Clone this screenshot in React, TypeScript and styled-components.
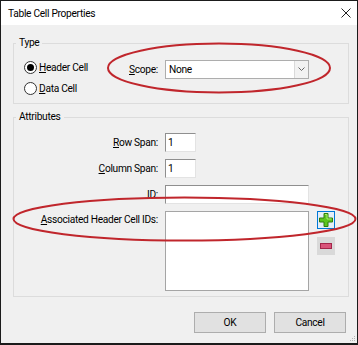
import React from 'react';
import styled, { createGlobalStyle } from 'styled-components';

const GlobalStyle = createGlobalStyle`
  html, body { margin: 0; padding: 0; background: #fff; }
  body {
    font-family: Roboto, "Noto Sans", sans-serif;
    font-size: 10.2px;
    letter-spacing: -0.3px;
    color: #000;
  }
  * { box-sizing: border-box; }
`;

const Dialog = styled.div`
  position: relative;
  width: 358px;
  height: 345px;
  border: 1px solid #1b1b1b;
  border-bottom-width: 2px;
  display: flex;
  flex-direction: column;
  background: #f0f0f0;
  overflow: hidden;
`;

const TitleBar = styled.div`
  height: 24px;
  flex: none;
  background: #fff;
  display: flex;
  align-items: center;
  justify-content: space-between;
  padding: 0 6px 0 7px;
`;

const Body = styled.div`
  flex: 1;
  display: flex;
  flex-direction: column;
  padding: 10px 8px 0 12px;
`;

const Group = styled.fieldset<{ $gap?: number }>`
  margin: ${(p) => p.$gap ?? 0}px 0 0 0;
  padding: 0;
  min-width: 0;
  border: 1px solid #dcdcdc;
`;

const Legend = styled.legend`
  padding: 0 3px;
  margin-left: 2px;
  line-height: 16px;
`;

const TypeGrid = styled.div`
  display: grid;
  grid-template-columns: 1fr auto 144px;
  grid-template-rows: 21px 21px;
  column-gap: 7px;
  align-items: center;
  padding: 6px 39px 4px 10px;
`;

const RadioLabel = styled.label<{ $row: number }>`
  grid-column: 1;
  grid-row: ${(p) => p.$row};
  display: inline-flex;
  align-items: center;
  gap: 2px;
`;

const RadioDot = styled.span<{ $checked?: boolean }>`
  width: 13px;
  height: 13px;
  border-radius: 50%;
  border: 1px solid #333;
  background: #fff;
  display: inline-flex;
  align-items: center;
  justify-content: center;
  &::after {
    content: '';
    width: 7px;
    height: 7px;
    border-radius: 50%;
    background: ${(p) => (p.$checked ? '#000' : 'transparent')};
  }
`;

const Key = styled.span`
  text-decoration: underline;
  text-underline-offset: 1px;
`;

const ScopeLabel = styled.span`
  grid-column: 2;
  grid-row: 1;
  margin-top: 3px;
`;

const Select = styled.div`
  grid-column: 3;
  grid-row: 1;
  margin-top: 3px;
  height: 19px;
  display: flex;
  border: 1px solid #adadad;
  background: #fff;
`;

const SelectValue = styled.span`
  flex: 1;
  padding-left: 3px;
  display: flex;
  align-items: center;
`;

const SelectArrow = styled.span`
  width: 14px;
  border-left: 1px solid #dadada;
  background: #f2f2f2;
  display: flex;
  align-items: center;
  justify-content: center;
`;

const AttrGrid = styled.div`
  display: grid;
  grid-template-columns: 1fr 144px 19px;
  grid-template-rows: 19px 19px 19px 80px;
  column-gap: 7px;
  row-gap: 7px;
  padding: 8px 13px 5px 0;
`;

const FieldLabel = styled.span<{ $top?: boolean }>`
  grid-column: 1;
  text-align: right;
  align-self: ${(p) => (p.$top ? 'start' : 'center')};
  margin-top: ${(p) => (p.$top ? '3px' : '0')};
`;

const TextBox = styled.div<{ $w?: number }>`
  grid-column: 2;
  width: ${(p) => (p.$w ? `${p.$w}px` : '100%')};
  height: 19px;
  background: #fff;
  border: 1px solid;
  border-color: #8f8f8f #e3e3e3 #e3e3e3 #8f8f8f;
  padding-left: 2px;
  display: flex;
  align-items: center;
`;

const ListBox = styled.div`
  grid-column: 2;
  height: 80px;
  background: #fff;
  border: 1px solid #a5a5a5;
`;

const SideButtons = styled.div`
  grid-column: 3;
  display: flex;
  flex-direction: column;
  align-items: flex-end;
  gap: 8px;
`;

const IconButton = styled.div<{ $focused?: boolean }>`
  width: 18px;
  height: 18px;
  display: flex;
  align-items: center;
  justify-content: center;
  background: ${(p) => (p.$focused ? '#e5eef7' : '#d9d9d9')};
  border: 1px solid ${(p) => (p.$focused ? '#0078d7' : '#d9d9d9')};
`;

const ButtonRow = styled.div`
  display: flex;
  justify-content: flex-end;
  gap: 8px;
  margin-top: 15px;
  padding-right: 3px;
`;

const PushButton = styled.div`
  width: 72px;
  height: 21px;
  background: #e1e1e1;
  border: 1px solid #adadad;
  display: flex;
  align-items: center;
  justify-content: center;
`;

const Annotations = styled.svg`
  position: absolute;
  left: -1px;
  top: -1px;
  pointer-events: none;
`;

const Grip = styled.svg`
  position: absolute;
  right: 1px;
  bottom: 1px;
`;

export default function App() {
  return (
    <>
      <GlobalStyle />
      <Dialog>
        <TitleBar>
          <span>Table Cell Properties</span>
          <svg width="10" height="10" viewBox="0 0 10 10">
            <path d="M0.5 0.5 L9.5 9.5 M9.5 0.5 L0.5 9.5" stroke="#222" strokeWidth="1" />
          </svg>
        </TitleBar>
        <Body>
          <Group>
            <Legend>Type</Legend>
            <TypeGrid>
              <RadioLabel $row={1}>
                <RadioDot $checked />
                <span>
                  <Key>H</Key>eader Cell
                </span>
              </RadioLabel>
              <RadioLabel $row={2}>
                <RadioDot />
                <span>
                  <Key>D</Key>ata Cell
                </span>
              </RadioLabel>
              <ScopeLabel>
                <Key>S</Key>cope:
              </ScopeLabel>
              <Select>
                <SelectValue>None</SelectValue>
                <SelectArrow>
                  <svg width="7" height="4" viewBox="0 0 7 4">
                    <path d="M0.5 0.5 L3.5 3.5 L6.5 0.5" stroke="#666" strokeWidth="1" fill="none" />
                  </svg>
                </SelectArrow>
              </Select>
            </TypeGrid>
          </Group>

          <Group $gap={5}>
            <Legend>Attributes</Legend>
            <AttrGrid>
              <FieldLabel>
                <Key>R</Key>ow Span:
              </FieldLabel>
              <TextBox $w={31}>1</TextBox>
              <FieldLabel>
                <Key>C</Key>olumn Span:
              </FieldLabel>
              <TextBox $w={31}>1</TextBox>
              <FieldLabel>ID:</FieldLabel>
              <TextBox />
              <FieldLabel $top>
                <Key>A</Key>ssociated Header Cell IDs:
              </FieldLabel>
              <ListBox />
              <SideButtons>
                <IconButton $focused>
                  <svg width="14" height="14" viewBox="0 0 14 14">
                    <path
                      d="M5 0.5 H9 V5 H13.5 V9 H9 V13.5 H5 V9 H0.5 V5 H5 Z"
                      fill="#5cc41e"
                      stroke="#2e7d0e"
                      strokeWidth="1"
                    />
                    <path d="M6 1.5 H8 V6 H12.5" stroke="#a6ec6a" strokeWidth="1" fill="none" />
                  </svg>
                </IconButton>
                <IconButton>
                  <svg width="12" height="6" viewBox="0 0 12 6">
                    <rect x="0.5" y="0.5" width="11" height="5" fill="#d9547a" stroke="#a3264a" strokeWidth="1" />
                  </svg>
                </IconButton>
              </SideButtons>
            </AttrGrid>
          </Group>

          <ButtonRow>
            <PushButton>OK</PushButton>
            <PushButton>Cancel</PushButton>
          </ButtonRow>
        </Body>

        <Annotations width="358" height="345" viewBox="0 0 358 345">
          <ellipse cx="219" cy="68" rx="111" ry="24.5" fill="none" stroke="#c0262c" strokeWidth="2" />
          <ellipse cx="184.5" cy="219" rx="171" ry="21.5" fill="none" stroke="#c0262c" strokeWidth="2" />
        </Annotations>
        <Grip width="6" height="6" viewBox="0 0 6 6">
          <rect x="4" y="0" width="1" height="1" fill="#b5b5b5" />
          <rect x="2" y="2" width="1" height="1" fill="#b5b5b5" />
          <rect x="4" y="2" width="1" height="1" fill="#b5b5b5" />
          <rect x="0" y="4" width="1" height="1" fill="#b5b5b5" />
          <rect x="2" y="4" width="1" height="1" fill="#b5b5b5" />
          <rect x="4" y="4" width="1" height="1" fill="#b5b5b5" />
        </Grip>
      </Dialog>
    </>
  );
}
